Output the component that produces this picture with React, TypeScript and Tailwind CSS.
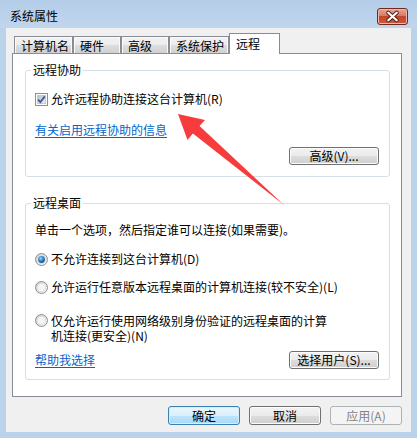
import React from "react";

const Check = () => (
    <svg width="13" height="13" viewBox="0 0 13 13" className="shrink-0">
        <defs>
            <linearGradient id="cbg" x1="0" y1="0" x2="1" y2="1">
                <stop offset="0" stopColor="#b9bec5"/>
                <stop offset="1" stopColor="#f2f2f2"/>
            </linearGradient>
        </defs>
        <rect x="0.5" y="0.5" width="12" height="12" fill="#fff" stroke="#8e8f8f"/>
        <rect x="2.5" y="2.5" width="8" height="8" fill="url(#cbg)" stroke="#c6c8cb"/>
        <path d="M3.2 6.6 L5.4 9 L9.8 3.4" fill="none" stroke="#3d5a98" strokeWidth="1.8"/>
    </svg>
)

const Radio = ({on}: {on?: boolean}) => (
    <svg width="13" height="13" viewBox="0 0 13 13" className="shrink-0">
        <defs>
            <linearGradient id="rbg" x1="0" y1="0" x2="1" y2="1">
                <stop offset="0" stopColor="#c9cbce"/>
                <stop offset="1" stopColor="#ffffff"/>
            </linearGradient>
            <radialGradient id="rdot" cx="0.4" cy="0.35" r="0.7">
                <stop offset="0" stopColor="#a5dcfb"/>
                <stop offset="0.5" stopColor="#2f86cf"/>
                <stop offset="1" stopColor="#15427d"/>
            </radialGradient>
        </defs>
        <circle cx="6.5" cy="6.5" r="6" fill="url(#rbg)" stroke="#8e8f8f"/>
        <circle cx="6.5" cy="6.5" r="4.3" fill="#f4f4f4" stroke="#d2d4d6" strokeWidth="0.8"/>
        {on && <circle cx="6.5" cy="6.5" r="3.4" fill="url(#rdot)"/>}
    </svg>
)

const Btn = ({children, w = "w-[90px]"}: {children: React.ReactNode; w?: string}) => (
    <div className={`${w} h-[18px] flex items-center justify-center rounded-[3px] border border-[#707070] bg-[linear-gradient(#f2f2f2_0%,#ebebeb_50%,#dddddd_50%,#cfcfcf_100%)] shadow-[inset_0_0_0_1px_#fcfcfc]`}>
        {children}
    </div>
)

const Tab = ({label, w, active}: {label: string; w: string; active?: boolean}) => (
    <div className={active
        ? `${w} h-[21px] relative z-10 bg-white border border-b-0 border-[#898c95] pl-[6px] pb-[1px] flex items-center`
        : `${w} h-[18px] border border-b-0 border-[#898c95] pl-[6px] flex items-center bg-[linear-gradient(#f3f3f3_0%,#ebebeb_50%,#dddddd_50%,#cfcfcf_100%)] shadow-[inset_0_0_0_1px_#fafafa]`}>
        {label}
    </div>
)

export default function App() {
    return (
        <div className="relative w-[417px] h-[438px] bg-[#bad2ea] flex flex-col text-[12px] leading-[14px] text-black font-['Noto_Sans_CJK_SC','Liberation_Sans',sans-serif]">
            {/* title bar */}
            <div className="h-[28px] flex items-start justify-between pl-[10px] pr-[9px] bg-linear-to-b from-[#b4cde8] to-[#c0d6ed]">
                <div className="mt-[9px] text-[12px] leading-[14px]">系统属性</div>
                <div className="mt-[8px] w-[31px] h-[17px] rounded-[3px] border border-[#6f2b21] bg-[linear-gradient(#e8a493_0%,#d87a63_45%,#c2452c_50%,#cc5a3e_100%)] shadow-[inset_0_0_0_1px_#f0b6a8] flex items-center justify-center">
                    <svg width="31" height="17" viewBox="0 0 31 17">
                        <path d="M11 4.5 L20 12.5 M20 4.5 L11 12.5" stroke="#4a1e17" strokeWidth="4.4" strokeLinecap="round"/>
                        <path d="M11 4.5 L20 12.5 M20 4.5 L11 12.5" stroke="#ffffff" strokeWidth="2.4" strokeLinecap="round"/>
                    </svg>
                </div>
            </div>

            {/* client */}
            <div className="mx-[6px] h-[404px] bg-[#f0f0f0] flex flex-col">
                <div className="mt-[5px] h-[21px] flex items-end pl-[8px]">
                    <Tab label="计算机名" w="w-[59px]"/>
                    <Tab label="硬件" w="w-[48px]"/>
                    <Tab label="高级" w="w-[48px]"/>
                    <Tab label="系统保护" w="w-[60px]"/>
                    <Tab label="远程" w="w-[51px]" active/>
                </div>

                <div className="-mt-px ml-[6px] w-[390px] h-[344px] bg-white border border-[#898c95] pl-[12px] pr-[11px] pt-[9px] flex flex-col">
                    <fieldset className="border border-[#d5dfe5] rounded-[3px] pl-[9px] pr-[10px] pb-[11px] flex flex-col">
                        <legend className="-ml-[4px] px-[2px] leading-[14px]">远程协助</legend>
                        <div className="mt-[15px] h-[14px] flex items-center gap-[3px]">
                            <Check/>
                            <span>允许远程协助连接这台计算机(R)</span>
                        </div>
                        <div className="mt-[17px] h-[14px] text-[#0066cc] underline underline-offset-2">有关启用远程协助的信息</div>
                        <div className="mt-[10px] flex justify-end">
                            <Btn>高级(V)...</Btn>
                        </div>
                    </fieldset>

                    <fieldset className="mt-[19px] border border-[#d5dfe5] rounded-[3px] pl-[9px] pr-[10px] pb-[10px] flex flex-col">
                        <legend className="-ml-[4px] px-[2px] leading-[14px]">远程桌面</legend>
                        <div className="mt-[13px] h-[14px]">单击一个选项，然后指定谁可以连接(如果需要)。</div>
                        <div className="mt-[15px] h-[14px] flex items-center gap-[3px]">
                            <Radio on/>
                            <span>不允许连接到这台计算机(D)</span>
                        </div>
                        <div className="mt-[14px] h-[14px] flex items-center gap-[3px]">
                            <Radio/>
                            <span>允许运行任意版本远程桌面的计算机连接(较不安全)(L)</span>
                        </div>
                        <div className="mt-[19px] flex items-start gap-[3px]">
                            <div className="pt-[1px]"><Radio/></div>
                            <div className="flex flex-col">
                                <span className="leading-[15px]">仅允许运行使用网络级别身份验证的远程桌面的计算</span>
                                <span className="leading-[15px]">机连接(更安全)(N)</span>
                            </div>
                        </div>
                        <div className="mt-[8px] h-[18px] flex items-center justify-between">
                            <span className="text-[#0066cc] underline underline-offset-2">帮助我选择</span>
                            <Btn>选择用户(S)...</Btn>
                        </div>
                    </fieldset>
                </div>

                <div className="mt-[9px] h-[19px] flex justify-end gap-[9px] pr-[9px]">
                    <div className="w-[72px] h-[19px] flex items-center justify-center rounded-[3px] border border-[#3c7fb1] bg-[linear-gradient(#eaf6fd_0%,#d9f0fc_50%,#bee6fd_50%,#a7d9f5_100%)] shadow-[inset_0_0_0_1px_#d4eefc]">确定</div>
                    <div className="w-[72px] h-[19px] flex items-center justify-center rounded-[3px] border border-[#707070] bg-[linear-gradient(#f2f2f2_0%,#ebebeb_50%,#dddddd_50%,#cfcfcf_100%)] shadow-[inset_0_0_0_1px_#fcfcfc]">取消</div>
                    <div className="w-[72px] h-[19px] flex items-center justify-center rounded-[3px] border border-[#adb2b5] bg-[#f4f4f4] text-[#838383]">应用(A)</div>
                </div>
            </div>

            {/* annotation arrow */}
            <svg className="absolute left-0 top-0 pointer-events-none" width="417" height="438" viewBox="0 0 417 438">
                <polygon points="178,114 205,120 199.5,126 284,205 192.9,133.4 187.5,140" fill="#f63c3c"/>
            </svg>
        </div>
    )
}
